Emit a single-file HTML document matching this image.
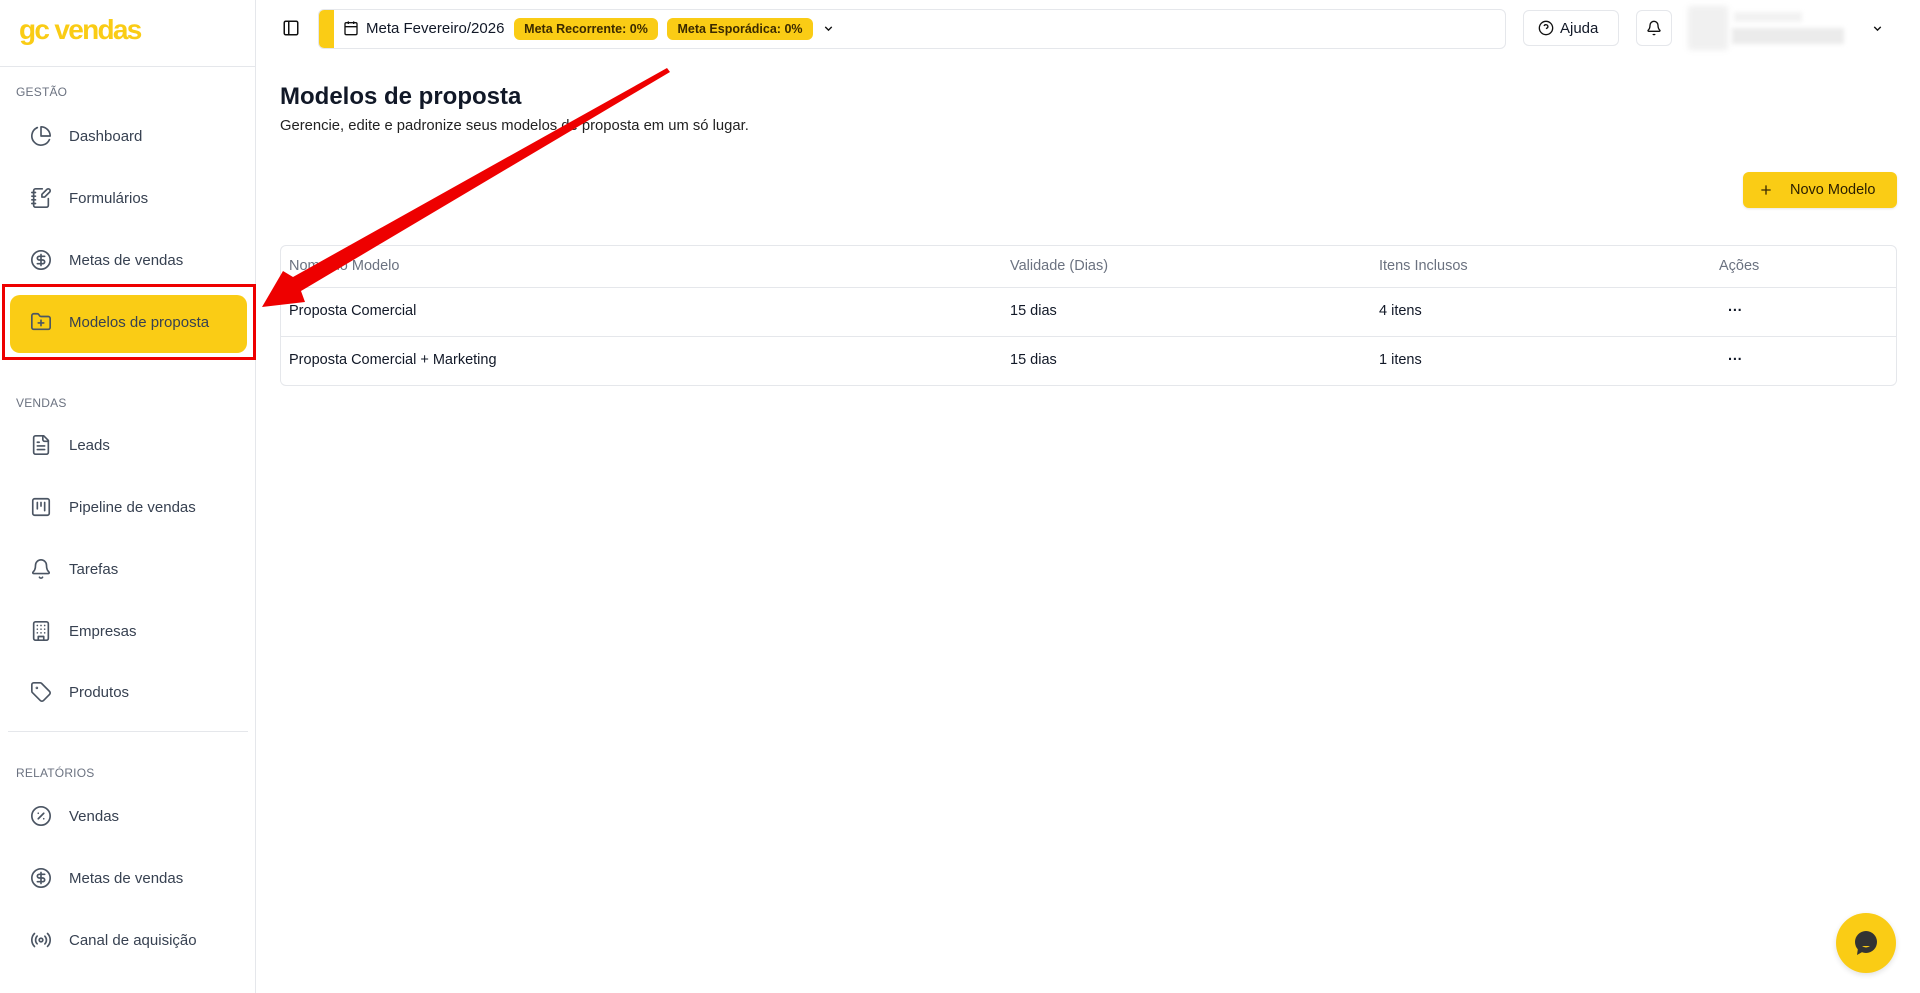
<!DOCTYPE html>
<html><head><meta charset="utf-8"><style>
*{box-sizing:border-box;margin:0;padding:0}
body{width:1920px;height:993px;background:#fff;font-family:"Liberation Sans",Arial,sans-serif;color:#111827;position:relative;overflow:hidden}
.abs{position:absolute}
.sb{left:0;top:0;width:256px;height:993px;border-right:1px solid #e5e7eb}
.logo{left:19px;top:14px;font-size:28px;font-weight:bold;color:#facc15;letter-spacing:-1.7px}
.sec{left:16px;font-size:12px;color:#6b7280;letter-spacing:.2px}
.it{left:0;width:256px;height:40px;display:flex;align-items:center}
.it svg{position:absolute;left:30px;width:22px;height:22px;fill:none;stroke:#4b5563;stroke-width:1.8;stroke-linecap:round;stroke-linejoin:round}
.it span{position:absolute;left:69px;font-size:15px;color:#374151}
.hl{height:1px;background:#e5e7eb}
.badge{top:18px;height:22px;border-radius:6px;background:#facc15;color:#3b2a00;font-size:12.5px;font-weight:bold;line-height:22px;text-align:center}
.th{top:258px;font-size:14.5px;color:#6b7280}
.td{font-size:14.5px;color:#111827}
</style></head><body>
<div class="abs sb"></div>
<div class="abs logo">gc vendas</div>
<div class="abs hl" style="left:0;top:66px;width:256px"></div>
<div class="abs sec" style="top:85px">GESTÃO</div>

<div class="abs" style="left:10px;top:295px;width:237px;height:58px;background:#facc15;border-radius:10px"></div>
<div class="abs" style="left:2px;top:284px;width:254px;height:76px;border:3px solid #ee0000"></div>

<div class="abs it" style="top:116px"><svg viewBox="0 0 24 24"><path d="M21.2 15.9A10 10 0 1 1 8 2.8"/><path d="M22 12A10 10 0 0 0 12 2v10z"/></svg><span>Dashboard</span></div>
<div class="abs it" style="top:178px"><svg viewBox="0 0 24 24"><path d="M13.4 2H6a2 2 0 0 0-2 2v16a2 2 0 0 0 2 2h12a2 2 0 0 0 2-2v-7.4"/><path d="M2 6h4M2 10h4M2 14h4M2 18h4"/><path d="M21.4 5.6a2.1 2.1 0 1 0-3-3L13 8v3h3z"/></svg><span>Formulários</span></div>
<div class="abs it" style="top:240px"><svg viewBox="0 0 24 24"><circle cx="12" cy="12" r="10"/><path d="M16 8h-6a2 2 0 1 0 0 4h4a2 2 0 1 1 0 4H8M12 18V6"/></svg><span>Metas de vendas</span></div>
<div class="abs it" style="top:302px"><svg viewBox="0 0 24 24"><path d="M12 10v6M9 13h6"/><path d="M20 20a2 2 0 0 0 2-2V8a2 2 0 0 0-2-2h-7.9a2 2 0 0 1-1.7-.9l-.8-1.2A2 2 0 0 0 7.9 3H4a2 2 0 0 0-2 2v13a2 2 0 0 0 2 2z"/></svg><span>Modelos de proposta</span></div>

<div class="abs sec" style="top:396px">VENDAS</div>
<div class="abs it" style="top:425px"><svg viewBox="0 0 24 24"><path d="M15 2H6a2 2 0 0 0-2 2v16a2 2 0 0 0 2 2h12a2 2 0 0 0 2-2V7z"/><path d="M14 2v4a2 2 0 0 0 2 2h4M10 9H8M16 13H8M16 17H8"/></svg><span>Leads</span></div>
<div class="abs it" style="top:487px"><svg viewBox="0 0 24 24"><rect x="3" y="3" width="18" height="18" rx="2"/><path d="M8 7v7M12 7v4M16 7v9"/></svg><span>Pipeline de vendas</span></div>
<div class="abs it" style="top:549px"><svg viewBox="0 0 24 24"><path d="M10.3 21a1.9 1.9 0 0 0 3.4 0"/><path d="M3.3 15.3A1 1 0 0 0 4 17h16a1 1 0 0 0 .7-1.7C19.4 14 18 12.6 18 8A6 6 0 0 0 6 8c0 4.6-1.4 6-2.7 7.3"/></svg><span>Tarefas</span></div>
<div class="abs it" style="top:611px"><svg viewBox="0 0 24 24"><rect x="4" y="2" width="16" height="20" rx="2"/><path d="M9 22v-4h6v4M8 6h.01M16 6h.01M12 6h.01M12 10h.01M12 14h.01M16 10h.01M16 14h.01M8 10h.01M8 14h.01"/></svg><span>Empresas</span></div>
<div class="abs it" style="top:672px"><svg viewBox="0 0 24 24"><path d="M12.6 2.6A2 2 0 0 0 11.2 2H4a2 2 0 0 0-2 2v7.2a2 2 0 0 0 .6 1.4l8.7 8.7a2.4 2.4 0 0 0 3.4 0l6.6-6.6a2.4 2.4 0 0 0 0-3.4z"/><circle cx="7.5" cy="7.5" r=".5"/></svg><span>Produtos</span></div>
<div class="abs hl" style="left:8px;top:731px;width:240px"></div>
<div class="abs sec" style="top:766px">RELATÓRIOS</div>
<div class="abs it" style="top:796px"><svg viewBox="0 0 24 24"><circle cx="12" cy="12" r="10"/><path d="M15 9l-6 6M9 9h.01M15 15h.01"/></svg><span>Vendas</span></div>
<div class="abs it" style="top:858px"><svg viewBox="0 0 24 24"><circle cx="12" cy="12" r="10"/><path d="M16 8h-6a2 2 0 1 0 0 4h4a2 2 0 1 1 0 4H8M12 18V6"/></svg><span>Metas de vendas</span></div>
<div class="abs it" style="top:920px"><svg viewBox="0 0 24 24"><path d="M4.9 19.1C1 15.2 1 8.8 4.9 4.9M7.8 16.2c-2.3-2.3-2.3-6.1 0-8.5M16.2 7.8c2.3 2.3 2.3 6.1 0 8.5M19.1 4.9C23 8.8 23 15.1 19.1 19"/><circle cx="12" cy="12" r="2"/></svg><span>Canal de aquisição</span></div>

<!-- topbar -->
<svg class="abs" style="left:282px;top:19px" width="18" height="18" viewBox="0 0 24 24" fill="none" stroke="#111" stroke-width="2"><rect x="3" y="3" width="18" height="18" rx="2"/><path d="M9 3v18"/></svg>
<div class="abs" style="left:318px;top:9px;width:1188px;height:40px;border:1px solid #e5e7eb;border-radius:6px;overflow:hidden"><div style="width:15px;height:100%;background:#facc15"></div></div>
<svg class="abs" style="left:343px;top:20px" width="16" height="16" viewBox="0 0 24 24" fill="none" stroke="#111" stroke-width="2"><rect x="3" y="4" width="18" height="18" rx="2"/><path d="M16 2v4M8 2v4M3 10h18"/></svg>
<div class="abs" style="left:366px;top:20px;font-size:15px">Meta Fevereiro/2026</div>
<div class="abs badge" style="left:514px;width:144px">Meta Recorrente: 0%</div>
<div class="abs badge" style="left:667px;width:146px">Meta Esporádica: 0%</div>
<svg class="abs" style="left:822px;top:22px" width="13" height="13" viewBox="0 0 24 24" fill="none" stroke="#111" stroke-width="2.5"><path d="M6 9l6 6 6-6"/></svg>

<div class="abs" style="left:1523px;top:10px;width:96px;height:36px;border:1px solid #e5e7eb;border-radius:6px"></div>
<svg class="abs" style="left:1538px;top:20px" width="16" height="16" viewBox="0 0 24 24" fill="none" stroke="#111" stroke-width="2"><circle cx="12" cy="12" r="10"/><path d="M9.1 9a3 3 0 0 1 5.8 1c0 2-3 3-3 3M12 17h.01"/></svg>
<div class="abs" style="left:1560px;top:20px;font-size:15px">Ajuda</div>
<div class="abs" style="left:1636px;top:10px;width:36px;height:36px;border:1px solid #e5e7eb;border-radius:6px"></div>
<svg class="abs" style="left:1646px;top:20px" width="16" height="16" viewBox="0 0 24 24" fill="none" stroke="#111" stroke-width="2"><path d="M10.3 21a1.9 1.9 0 0 0 3.4 0"/><path d="M3.3 15.3A1 1 0 0 0 4 17h16a1 1 0 0 0 .7-1.7C19.4 14 18 12.6 18 8A6 6 0 0 0 6 8c0 4.6-1.4 6-2.7 7.3"/></svg>
<div class="abs" style="left:1688px;top:6px;width:40px;height:44px;background:#f0f0f0;filter:blur(3px)"></div>
<div class="abs" style="left:1734px;top:12px;width:68px;height:10px;background:#f2f2f2;filter:blur(2px)"></div>
<div class="abs" style="left:1732px;top:28px;width:112px;height:16px;background:#ebebeb;filter:blur(2px)"></div>
<svg class="abs" style="left:1871px;top:22px" width="13" height="13" viewBox="0 0 24 24" fill="none" stroke="#111" stroke-width="2.5"><path d="M6 9l6 6 6-6"/></svg>

<!-- content -->
<div class="abs" style="left:280px;top:83px;font-size:24px;font-weight:bold">Modelos de proposta</div>
<div class="abs" style="left:280px;top:118px;font-size:14.8px;color:#222">Gerencie, edite e padronize seus modelos de proposta em um só lugar.</div>

<div class="abs" style="left:1743px;top:172px;width:154px;height:36px;background:#facc15;border-radius:6px;box-shadow:0 1px 2px rgba(0,0,0,.1)"></div>
<svg class="abs" style="left:1758px;top:182px" width="16" height="16" viewBox="0 0 24 24" fill="none" stroke="#3b2a00" stroke-width="2"><path d="M5 12h14M12 5v14"/></svg>
<div class="abs" style="left:1790px;top:182px;font-size:14.5px;color:#2a1e00">Novo Modelo</div>

<div class="abs" style="left:280px;top:245px;width:1617px;height:141px;border:1px solid #e5e7eb;border-radius:6px"></div>
<div class="abs hl" style="left:281px;top:287px;width:1615px"></div>
<div class="abs hl" style="left:281px;top:336px;width:1615px"></div>
<div class="abs th" style="left:289px">Nome do Modelo</div>
<div class="abs th" style="left:1010px">Validade (Dias)</div>
<div class="abs th" style="left:1379px">Itens Inclusos</div>
<div class="abs th" style="left:1719px">Ações</div>
<div class="abs td" style="left:289px;top:303px">Proposta Comercial</div>
<div class="abs td" style="left:1010px;top:303px">15 dias</div>
<div class="abs td" style="left:1379px;top:303px">4 itens</div>
<div class="abs td" style="left:1728px;top:303px;font-weight:bold">···</div>
<div class="abs td" style="left:289px;top:352px">Proposta Comercial + Marketing</div>
<div class="abs td" style="left:1010px;top:352px">15 dias</div>
<div class="abs td" style="left:1379px;top:352px">1 itens</div>
<div class="abs td" style="left:1728px;top:352px;font-weight:bold">···</div>

<!-- chat -->
<div class="abs" style="left:1836px;top:913px;width:60px;height:60px;border-radius:50%;background:#facc15;box-shadow:0 2px 6px rgba(0,0,0,.12)"></div>
<svg class="abs" style="left:1849px;top:926px" width="34" height="34" viewBox="0 0 34 34"><circle cx="17" cy="16" r="11" fill="#333"/><path d="M9 22l-1 7 7-4z" fill="#333"/><path d="M13 20q4 3 8 0z" fill="#facc15"/></svg>

<!-- arrow -->
<svg class="abs" style="left:0;top:0" width="1920" height="993"><polygon points="667,68 670,72 301,291 305,302 262,307 283,271 293,277" fill="#ee0000"/></svg>
</body></html>
